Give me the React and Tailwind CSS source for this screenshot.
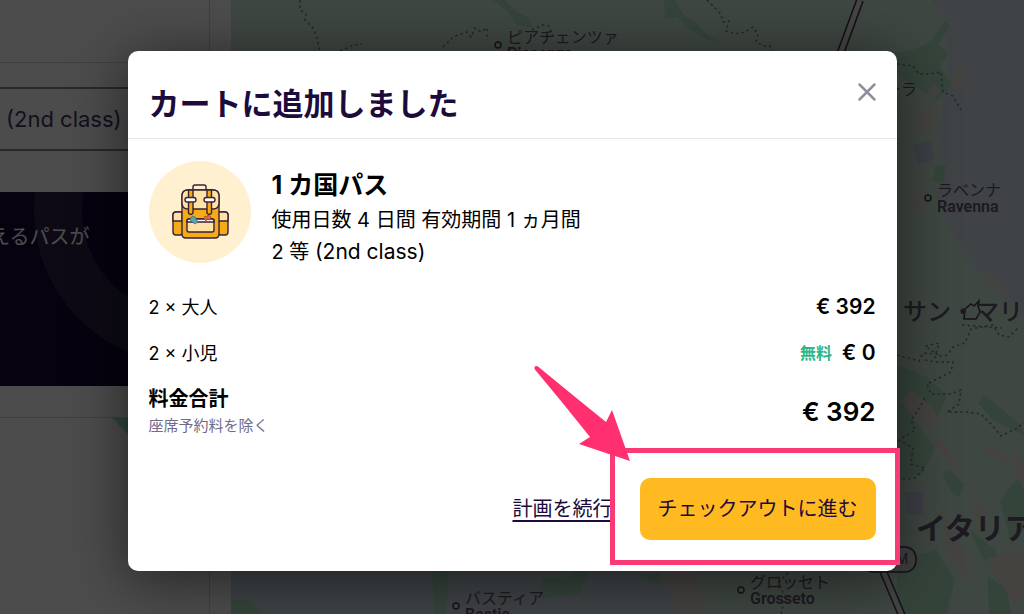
import React from 'react';
import { X } from 'lucide-react';

const fares = [
  { id: 'adult', label: '2 × 大人', price: '€ 392' },
  { id: 'child', label: '2 × 小児', price: '€ 0', badge: '無料' },
];

const Backpack = () => (
  <svg viewBox="0 0 102 102" className="size-[102px] shrink-0" aria-hidden="true">
    <circle cx="51" cy="51" r="51" fill="#fff0d0" />
    <g stroke="#3b2135" strokeWidth="1.4" strokeLinejoin="round" strokeLinecap="round">
      <path d="M44 29v-3q0-2 2-2h9q2 0 2 2v3" fill="none" />
      <rect x="24" y="51" width="10" height="23" rx="3" fill="#f5ab18" />
      <path d="M24 60v-6q0-3 3-3h6v9z" fill="#ffe2a8" />
      <rect x="69" y="51" width="10" height="23" rx="3" fill="#f5ab18" />
      <path d="M69 51h7q3 0 3 3v6h-10z" fill="#ffe2a8" />
      <path d="M33 35q0-6 6-6h25q6 0 6 6v38q0 4-4 4H37q-4 0-4-4z" fill="#f5ab18" />
      <path d="M33 35q0-6 6-6h25q6 0 6 6v7q0 6-6 6H39q-6 0-6-6z" fill="#ffe2a8" />
      <path d="M39.500 29h4.500v23q-2.200 3-4.500 0zM58 29h4.500v23q-2.200 3-4.500 0z" fill="#f5ab18" />
      <rect x="36" y="36.500" width="11" height="4.500" rx="2.200" fill="#fff" />
      <rect x="55" y="36.500" width="11" height="4.500" rx="2.200" fill="#fff" />
      <rect x="38" y="58" width="27" height="13" rx="2" fill="#ffe2a8" />
      <path d="M38 61v-1q0-2 2-2h23q2 0 2 2v1z" fill="#fff" />
    </g>
    <path d="M41 57l3-2 2 1 3 5-3 2-4-3z" fill="#5fa3ad" stroke="#3a6470" strokeWidth=".7" />
    <path d="M55 58l1-3 2 1 1-2 3 2-1 3-3-1-1 2z" fill="#e8673a" stroke="#8d3526" strokeWidth=".6" />
  </svg>
);

const MapPin = ({ x, y, name, latin }) => (
  <g>
    <circle cx={x} cy={y} r="3" fill="none" stroke="#4a4158" strokeWidth="1.500" />
    <text x={x + 9} y={y - 2} fontSize="16">{name}</text>
    <text x={x + 9} y={y + 14} fontSize="16" fontWeight="600">{latin}</text>
  </g>
);

const MapView = () => (
  <svg
    viewBox="231 0 793 614"
    preserveAspectRatio="xMinYMin slice"
    className="h-full min-w-0 flex-1 bg-[#d3efdd] font-['Roboto','Noto_Sans_CJK_JP',sans-serif]"
  >
    {/* sea */}
    <path
      d="M931 0l9 14 10 9-6 10 5 20-3 30 -4 15-2 40-3 60 8 18 9 20 12 20 20 26 24 20 14 16V0z"
      fill="#d2dfea"
    />
    <path d="M231 545H650l12 35 14 20 8 14H231z" fill="#d2dfea" />
    {/* forests */}
    <g fill="#b2e4c5">
      <path d="M493 0h12l12 12 12 6 4 10-16-3-10-13z" />
      <path d="M664 0h11l8 14 14 10 10 10 12 8-10-2-20-10-12-13-12 2z" />
      <path d="M946 20l4 6-12 18 10 10-8 12 12 20-14 14-24-14-16-10-8-22 28-6 12-6z" />
      <path d="M936 165h10l-2 18-12-2z" />
      <path d="M897 365l30 12 20 18-8 20-24 4 20 30-14 26-24 6z" />
      <path d="M950 470l14 14-4 14-10-8-8-16zM985 395l34 28 5 12-30-14-16-18z" />
      <path d="M897 560l40-10 18 30-8 34h-50z" />
      <path d="M987 575l20 14 4 25h-22zM1000 500l24-30v60l-14 10z" />
      <path d="M970 530l26 20 8 26-22-18z" />
      <path d="M432 560h18l-4 54h-12z" />
      <path d="M542 578h24l14-14 8 8-8 22-40 4zM640 574h24l-6 12z" />
      <path d="M231 598l20 4 12 12h-32z" />
    </g>
    {/* towns and bare ground */}
    <g fill="#e8dfd5">
      <path d="M926 90l10-6 4 8-6 6zM955 72l10-3-2 14-8 10-4-8zM916 112l24-4-6 22-16 2z" />
      <path d="M912 196l14-6-4 20-12 2zM950 228l4 2 8 18-2-2-8-12zM980 272l10 4 18 16-4 2-16-8z" />
      <path d="M900 400l12-8 20 14 10 18-20 4zM930 440l10-2 18 24-2 10zM978 444l26 6 6 12-14-2z" />
      <path d="M938 500l14 30 20 40-8 14-16-34zM972 490l12 18 2 30-12-24z" />
      <path d="M986 560l38-14v50l-10 8zM658 571h40l10 43h-28zM1012 450l12 10v30l-10-20z" />
    </g>
    <path d="M913 145l18-5 3 20-16 4zM905 492h18v22h-16z" fill="#c9d2e6" />
    {/* region borders */}
    <g fill="none" stroke="#78877f" strokeWidth="1.500" strokeDasharray="2.500 3">
      <path d="M300 0v10l6 4-1 6 8 8 4 10 3 14M340 51l14-6 8-1M443 47l10-10 14-5 4 5 4-9 6 4 6-4v12M532 30l10-5 7 1 4 10" />
      <path d="M707 0l8 8 6 6 2 8 6-1-3 10 9 3 10-2 8-5 5 7-2 8 8 4h6l2 6" />
      <path d="M897 64l16 2 6 8 10 0 12-2 2 20 10 4 8 14" />
      <path d="M897 355l22 6 4-8 14 1-12-8 14-3-4 14 12-2 6-8 12-4 6-14 22-4 6 10 10 2 10-10" />
      <path d="M925 360l10 2 18 0-2 10-24 12 4 10 20 0 10-4-2 14-12 8 20 0 14 2 10 10 10 12 16-8 8-6" />
      <path d="M925 398l-8 14-6 8 4 10-16 10 14 8-2 16 14 4-10 10-14 2M781 614l4-16-6-16 10-10M962 325l40 3" />
    </g>
    {/* motorways */}
    <g fill="none">
      <path d="M860 0L838 60M870 540l38 90" stroke="#3c3c46" strokeWidth="8" />
      <path d="M860 0L838 60M870 540l38 90" stroke="#e6e6e6" strokeWidth="5" />
      <rect x="862" y="547" width="54" height="25" rx="11" fill="#d6d6d6" stroke="#3c3c46" strokeWidth="1.500" />
    </g>
    <path d="M965 309l6-5 3 2 5-5-1 5 2 6-4 7h-12z" fill="none" stroke="#3c3c46" strokeWidth="1.500" />
    <g fill="#62576f">
      <MapPin x={498} y={45} name="ピアチェンツァ" latin="Piacenza" />
      <MapPin x={928} y={198} name="ラベンナ" latin="Ravenna" />
      <MapPin x={741} y={590} name="グロッセト" latin="Grosseto" />
      <MapPin x={456} y={606} name="バスティア" latin="Bastia" />
      <text x="885" y="95" fontSize="16">ーラ</text>
      <text x="903" y="320" fontSize="24" fontWeight="500">サン・マリノ</text>
      <text x="916" y="539" fontSize="30" fontWeight="700">イタリア</text>
      <text x="896" y="564" fontSize="14">M</text>
    </g>
  </svg>
);

const PlannerPanel = () => (
  <aside className="flex h-full w-[231px] shrink-0 flex-col overflow-hidden bg-white">
    <div className="h-[63px] w-[210px] shrink-0 border-r border-b border-gray-300" />
    <div className="mt-6 flex h-[64px] shrink-0 items-center border-y-2 border-[#8a84a0] pl-[6px] text-[22px] text-[#44356a]">
      (2nd class)
    </div>
    <div className="relative mt-[41px] h-[194px] shrink-0 overflow-hidden bg-[#140732]">
      <div className="absolute -top-[136px] left-[34px] size-[308px] rounded-full border-[48px] border-[#2d2448]" />
      <p className="relative -ml-[10px] pt-[30px] text-[20px] leading-[30px] whitespace-nowrap text-white">えるパスが</p>
    </div>
    <div className="mt-[31px] w-[210px] flex-1 border-t border-r border-gray-300">
      <svg viewBox="0 0 60 60" className="ml-[112px] size-[60px]" aria-hidden="true">
        <path d="M0 0h60v60z" fill="#9ae6cd" />
      </svg>
    </div>
  </aside>
);

// Highlights the checkout button it is placed next to
const CheckoutHint = () => (
  <div className="pointer-events-none absolute -top-[30px] -right-[24px] -bottom-[25px] -left-[30px] border-[5px] border-[#f93a75]">
    <svg viewBox="0 0 100 100" className="absolute -top-[88px] -left-[82px] size-[100px]" aria-hidden="true">
      <path
        d="M1.500 4Q1 0 5 1.500Q42 32 73 57L79 45 97 96 46 79 57 72Q30 38 1.500 4z"
        fill="#ff2f70"
      />
    </svg>
  </div>
);

const CartDialog = () => (
  <section
    role="dialog"
    aria-modal="true"
    aria-labelledby="cart-title"
    className="w-full max-w-[769px] rounded-[10px] bg-white text-black shadow-[0_8px_56px_rgba(0,0,0,0.55)]"
  >
    <header className="flex items-start justify-between border-b border-gray-200 px-[21px] pt-[30px] pb-[12px]">
      <h2 id="cart-title" className="text-[31px] leading-[45px] font-bold text-[#1c0b3b]">
        カートに追加しました
      </h2>
      <button type="button" aria-label="閉じる" className="-mr-[6px] text-[#90909a]">
        <X size={30} strokeWidth={2} className="-mt-[4px]" />
      </button>
    </header>

    <div className="px-[21px] pt-[22px] pb-[31px]">
      <div className="flex gap-[21px]">
        <Backpack />
        <div className="pt-[6px]">
          <h3 className="text-[25px] leading-[36px] font-bold">1 カ国パス</h3>
          <div className="mt-[2px] text-[20px] leading-[31px]">
            <p>使用日数 4 日間 有効期間 1 ヵ月間</p>
            <p>
              2 等 <span className="text-[21px]">(2nd class)</span>
            </p>
          </div>
        </div>
      </div>

      <ul className="mt-[16px]">
        {fares.map((fare) => (
          <li key={fare.id} className="flex h-[46px] items-center justify-between">
            <span className="text-[18px]">{fare.label}</span>
            <span className="flex items-center gap-[10px]">
              {fare.badge && <span className="text-[16px] font-bold text-[#2db587]">{fare.badge}</span>}
              <span className="text-[21px] font-semibold">{fare.price}</span>
            </span>
          </li>
        ))}
      </ul>

      <div className="mt-[8px] flex items-center justify-between">
        <div>
          <p className="text-[20px] leading-[30px] font-bold">料金合計</p>
          <p className="text-[15px] leading-[24px] text-[#716a8b]">座席予約料を除く</p>
        </div>
        <span className="text-[26px] font-semibold">€ 392</span>
      </div>

      <div className="mt-[40px] flex items-center justify-end gap-[27px]">
        <a href="#plan" className="text-[20px] text-[#1c0b3b] underline underline-offset-4">
          計画を続行
        </a>
        <div className="relative">
          <button
            type="button"
            className="h-[62px] rounded-[10px] bg-[#ffba22] px-[18px] text-[20px] text-[#1c0b3b]"
          >
            チェックアウトに進む
          </button>
          <CheckoutHint />
        </div>
      </div>
    </div>
  </section>
);

export default function App() {
  return (
    <div className="relative h-screen overflow-hidden font-['Inter','Noto_Sans_CJK_JP',sans-serif]">
      <div className="flex h-full">
        <PlannerPanel />
        <MapView />
      </div>
      <div className="absolute inset-0 flex items-start justify-center bg-black/70 pt-[51px]">
        <CartDialog />
      </div>
    </div>
  );
}
